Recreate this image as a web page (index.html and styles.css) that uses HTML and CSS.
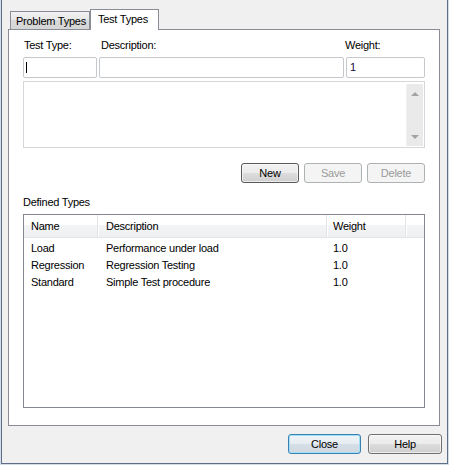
FILE: index.html
```html
<!DOCTYPE html>
<html>
<head>
    <meta charset="UTF-8">
    <title>Test Types</title>
    <link rel="stylesheet" href="styles.css">
</head>
<body>
    <div class="window">
        <div class="frame">
            <div class="tabs">
                <div class="tab">Problem Types</div>
                <div class="tab active">Test Types</div>
            </div>
            <div class="panel">
                <div class="fields">
                    <div class="field typeField">
                        <div class="label">Test Type:</div>
                        <div class="input"><span class="caret"></span></div>
                    </div>
                    <div class="field descField">
                        <div class="label">Description:</div>
                        <div class="input"></div>
                    </div>
                    <div class="field weightField">
                        <div class="label">Weight:</div>
                        <div class="input">1</div>
                    </div>
                </div>
                <div class="memo">
                    <div class="scrollbar">
                        <span class="arrow up"></span>
                        <span class="arrow down"></span>
                    </div>
                </div>
                <div class="actions">
                    <button class="btn default">New</button>
                    <button class="btn" disabled>Save</button>
                    <button class="btn" disabled>Delete</button>
                </div>
                <div class="caption">Defined Types</div>
                <div class="list">
                    <div class="listHead">
                        <div class="col name">Name</div>
                        <div class="col desc">Description</div>
                        <div class="col weight">Weight</div>
                        <div class="col rest"></div>
                    </div>
                    <div class="row">
                        <div class="col name">Load</div>
                        <div class="col desc">Performance under load</div>
                        <div class="col weight">1.0</div>
                    </div>
                    <div class="row">
                        <div class="col name">Regression</div>
                        <div class="col desc">Regression Testing</div>
                        <div class="col weight">1.0</div>
                    </div>
                    <div class="row">
                        <div class="col name">Standard</div>
                        <div class="col desc">Simple Test procedure</div>
                        <div class="col weight">1.0</div>
                    </div>
                </div>
            </div>
            <div class="footer">
                <button class="btn focused close">Close</button>
                <button class="btn help">Help</button>
            </div>
        </div>
    </div>
</body>
</html>
```

FILE: styles.css
```css
html, body {
    margin: 0;
    padding: 0;
}

body {
    width: 449px;
    height: 465px;
    overflow: hidden;
    font-family: "Liberation Sans", Arial, sans-serif;
    font-size: 11px;
    line-height: 13px;
    letter-spacing: -0.25px;
    color: #000;
}

.window {
    box-sizing: border-box;
    width: 449px;
    height: 465px;
    border: 1px solid #d3deea;
    border-top: none;
    background: #f0f0f0;
}

.frame {
    box-sizing: border-box;
    height: 464px;
    border: 1px solid #5f6e88;
    border-top: none;
    display: flex;
    flex-direction: column;
}

/* tab strip */
.tabs {
    display: flex;
    align-items: flex-end;
    padding: 9px 0 0 8px;
    margin-bottom: -1px;
    position: relative;
    z-index: 1;
}

.tab {
    box-sizing: border-box;
    width: 80px;
    height: 18px;
    margin-bottom: 1px;
    padding: 3px 0 0 5px;
    border: 1px solid #898c95;
    border-bottom: none;
    background: linear-gradient(#f2f2f2, #e6e6e6 50%, #d9d9d9 50%, #d6d6d6);
    white-space: nowrap;
    overflow: hidden;
}

.tab.active {
    width: 69px;
    height: 21px;
    margin-bottom: 0;
    padding: 3px 0 0 7px;
    background: #fff;
}

.panel {
    box-sizing: border-box;
    margin: 0 7px 0 6px;
    padding: 9px 14px 17px 14px;
    border: 1px solid #898c95;
    background: #fff;
}

/* edit fields */
.fields {
    display: flex;
    gap: 2px;
}

.label {
    height: 13px;
    margin-bottom: 5px;
    padding-left: 1px;
    white-space: nowrap;
}

.descField .label { padding-left: 2px; }
.weightField .label { margin-left: -1px; padding-left: 0; }

.input {
    box-sizing: border-box;
    height: 21px;
    padding: 3px 0 0 3px;
    border: 1px solid #c5c8cc;
    border-radius: 2px;
    color: #1a0a3a;
    position: relative;
}

.typeField .input { width: 74px; }
.descField .input { width: 245px; }
.weightField .input { width: 79px; }

.caret {
    position: absolute;
    left: 2px;
    top: 4px;
    width: 1px;
    height: 11px;
    background: #000;
}

.memo {
    box-sizing: border-box;
    height: 67px;
    margin-top: 3px;
    border: 1px solid #d4d7db;
    display: flex;
    justify-content: flex-end;
    padding: 1px 1px 1px 0;
}

.scrollbar {
    box-sizing: border-box;
    width: 17px;
    margin-top: 1px;
    background: #eaeaea;
    border-left: 1px solid #f2f2f2;
    display: flex;
    flex-direction: column;
    justify-content: space-between;
    align-items: center;
    padding: 8px 0 7px 0;
}

.arrow {
    width: 0;
    height: 0;
    border-left: 4px solid transparent;
    border-right: 4px solid transparent;
}

.arrow.up { border-bottom: 4px solid #a3a3a3; }
.arrow.down { border-top: 4px solid #a3a3a3; }

/* buttons */
.btn {
    box-sizing: border-box;
    height: 20px;
    padding: 0;
    border: 1px solid #707070;
    border-radius: 3px;
    background: linear-gradient(#f2f2f2, #ebebeb 50%, #dddddd 50%, #cfcfcf);
    font-family: inherit;
    font-size: 11px;
    letter-spacing: -0.25px;
    color: #000;
    box-shadow: inset 0 0 0 1px rgba(255, 255, 255, 0.6);
}

.btn:disabled {
    border-color: #adb2b5;
    background: #f4f4f4;
    color: #9a9a9a;
    box-shadow: none;
}

.btn.default {
    border-color: #5a5a5a;
}

.btn.focused {
    border-color: #3c7fb1;
    background: linear-gradient(#f0f4f7, #e6ecf1 50%, #d6dee6 50%, #cfd8e0);
    box-shadow: inset 0 0 0 1px #9ee0f7;
}

.actions {
    display: flex;
    justify-content: flex-end;
    gap: 5px;
    margin-top: 15px;
}

.actions .btn {
    width: 58px;
}

.caption {
    margin-top: 13px;
    height: 13px;
}

/* list view */
.list {
    box-sizing: border-box;
    height: 194px;
    margin-top: 5px;
    border: 1px solid #828790;
}

.listHead {
    display: flex;
    height: 23px;
    background: linear-gradient(#ffffff, #ffffff 45%, #f3f4f5 45%, #eff0f2);
    border-bottom: 1px solid #e5e5e5;
    box-sizing: border-box;
    margin-bottom: 2px;
}

.listHead .col {
    box-sizing: border-box;
    padding-top: 5px;
    border-right: 1px solid #e3e4e6;
    box-shadow: 1px 0 0 #fff;
}

.listHead .rest {
    flex: 1;
    border-right: none;
    box-shadow: none;
}

.row {
    display: flex;
    height: 17px;
    line-height: 17px;
}

.col {
    box-sizing: border-box;
    white-space: nowrap;
}

.col.name { width: 74px; padding-left: 7px; }
.col.desc { width: 229px; padding-left: 8px; }
.col.weight { width: 79px; padding-left: 6px; }

/* dialog buttons */
.footer {
    display: flex;
    justify-content: flex-end;
    gap: 7px;
    margin-top: 8px;
    padding-right: 5px;
}

.footer .close { width: 73px; }
.footer .help { width: 74px; }
```
